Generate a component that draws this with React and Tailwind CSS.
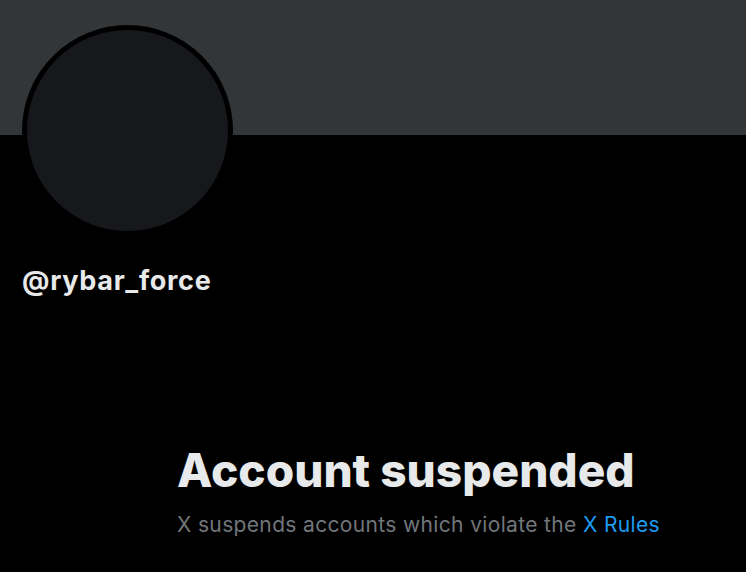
export default function App() {
  return (
    <div className="min-h-[572px] w-full bg-black font-['Inter',sans-serif] overflow-hidden">
      <div className="h-[135px] bg-[#333639]" />
      <div className="ml-[22px] -mt-[110px] h-[211px] w-[211px] rounded-full border-[5px] border-black bg-[#16181c]" />
      <div className="mt-[30px] ml-[22px] text-[27px] leading-[30px] tracking-[0.7px] font-bold text-[#e7e9ea]">
        @rybar_force
      </div>
      <div className="mt-[148px] pl-[177px]">
        <h1 className="text-[46px] leading-[52px] font-extrabold text-[#e7e9ea]">Account suspended</h1>
        <p className="mt-[17px] text-[21px] leading-[24px] tracking-[0.35px] text-[#71767b]">
          X suspends accounts which violate the <a className="text-[#1d9bf0]">X Rules</a>
        </p>
      </div>
    </div>
  );
}
